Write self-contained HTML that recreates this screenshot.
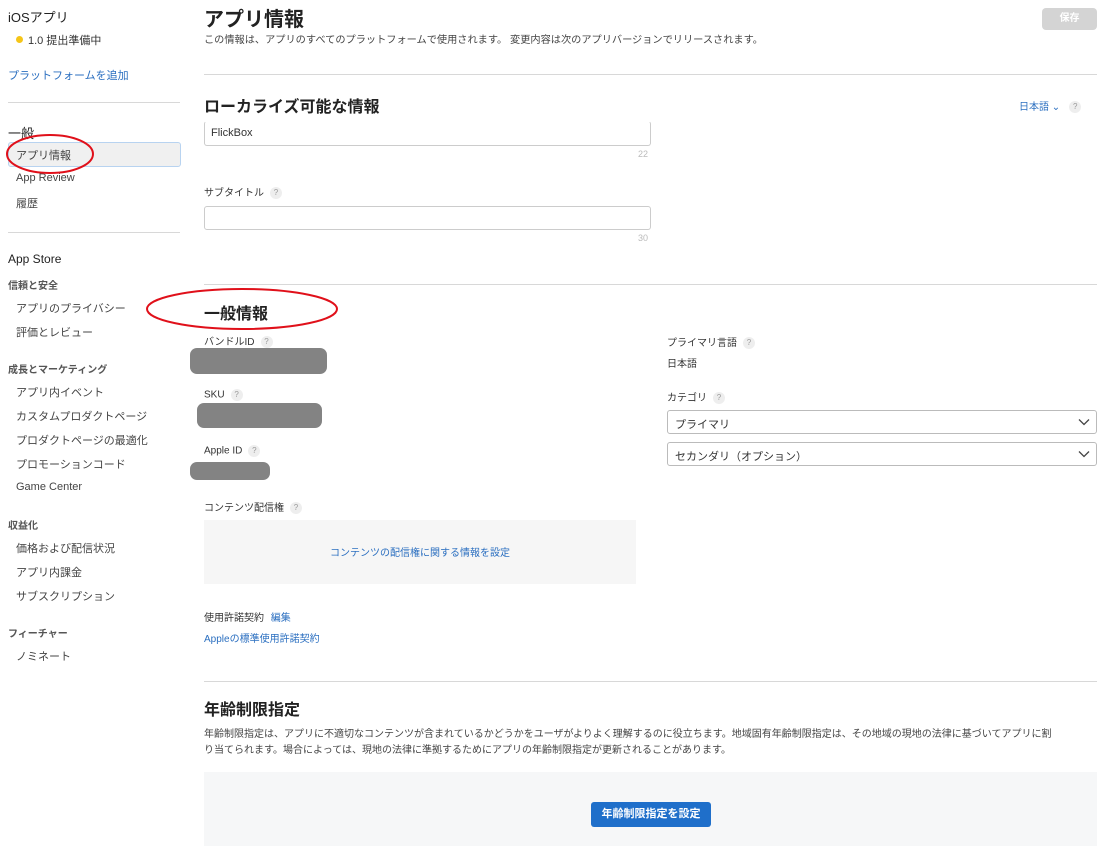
<!DOCTYPE html>
<html><head><meta charset="utf-8"><style>
*{margin:0;padding:0;box-sizing:border-box}
body{width:1108px;height:846px;overflow:hidden;background:#fff;font-family:"Liberation Sans","Noto Sans CJK JP",sans-serif;color:#333;position:relative}
.a{position:absolute;white-space:nowrap}
.s{font-size:11px;color:#444;left:16px}
.h{font-size:10px;font-weight:bold;color:#555;left:8px}
.b{color:#2b6fc0}
.q{display:inline-block;width:12px;height:12px;border-radius:50%;background:#eee;color:#999;font-size:8px;text-align:center;line-height:12px;margin-left:6px;vertical-align:middle}
.hr{position:absolute;height:1px;background:#d8d8d8}
.in{position:absolute;border:1px solid #ccc;border-radius:3px;background:#fff}
.lb{font-size:10px;color:#333}
.cnt{font-size:9px;color:#bbb}
.blob{position:absolute;background:#838383;border-radius:7px}
.sel{position:absolute;left:667px;width:430px;height:24px;border:1px solid #bbb;border-radius:3px;font-size:11px;color:#333;padding:5px 7px}
.sel svg{position:absolute;right:6px;top:7px}
</style></head><body>
<div class="a" style="left:8px;top:7px;font-size:13px;color:#222">iOSアプリ</div>
<div class="a" style="left:16px;top:32px;font-size:11px;color:#333"><span style="display:inline-block;width:7px;height:7px;border-radius:50%;background:#f5c518;margin-right:5px;vertical-align:1px"></span>1.0 提出準備中</div>
<div class="a b" style="left:8px;top:67px;font-size:11px">プラットフォームを追加</div>
<div class="hr" style="left:8px;top:102px;width:172px"></div>
<div class="a" style="left:8px;top:123px;font-size:13px;color:#222">一般</div>
<div style="position:absolute;left:8px;top:142px;width:173px;height:25px;background:#f0f0f0;border:1px solid #b8d3f0;border-radius:3px"></div>
<div class="a s" style="top:147px">アプリ情報</div>
<div class="a s" style="top:172px">App Review</div>
<div class="a s" style="top:195px">履歴</div>
<div class="hr" style="left:8px;top:232px;width:172px"></div>
<div class="a" style="left:8px;top:252px;font-size:12px;color:#222">App Store</div>
<div class="a h" style="top:277px">信頼と安全</div>
<div class="a s" style="top:300px">アプリのプライバシー</div>
<div class="a s" style="top:324px">評価とレビュー</div>
<div class="a h" style="top:361px">成長とマーケティング</div>
<div class="a s" style="top:384px">アプリ内イベント</div>
<div class="a s" style="top:408px">カスタムプロダクトページ</div>
<div class="a s" style="top:432px">プロダクトページの最適化</div>
<div class="a s" style="top:456px">プロモーションコード</div>
<div class="a s" style="top:481px">Game Center</div>
<div class="a h" style="top:517px">収益化</div>
<div class="a s" style="top:540px">価格および配信状況</div>
<div class="a s" style="top:564px">アプリ内課金</div>
<div class="a s" style="top:588px">サブスクリプション</div>
<div class="a h" style="top:625px">フィーチャー</div>
<div class="a s" style="top:648px">ノミネート</div>

<div class="a" style="left:204px;top:3px;font-size:20px;font-weight:bold;color:#222">アプリ情報</div>
<div class="a" style="left:204px;top:31px;font-size:10.2px;color:#444">この情報は、アプリのすべてのプラットフォームで使用されます。 変更内容は次のアプリバージョンでリリースされます。</div>
<div style="position:absolute;left:1042px;top:8px;width:55px;height:22px;background:#d4d4d4;border-radius:4px;color:#fff;font-size:10px;font-weight:bold;text-align:center;line-height:22px">保存</div>
<div class="hr" style="left:204px;top:74px;width:893px"></div>
<div class="a" style="left:204px;top:93px;font-size:16px;font-weight:bold;color:#222">ローカライズ可能な情報</div>
<div class="a b" style="left:1019px;top:98px;font-size:10px">日本語 ⌄<span class="q" style="margin-left:9px">?</span></div>
<div class="in" style="left:204px;top:121px;width:447px;height:25px;border-top-color:#fff"></div>
<div class="a" style="left:211px;top:127px;font-size:11px;color:#333">FlickBox</div>
<div class="a cnt" style="left:638px;top:149px">22</div>
<div class="a lb" style="left:204px;top:184px">サブタイトル<span class="q">?</span></div>
<div class="in" style="left:204px;top:206px;width:447px;height:24px"></div>
<div class="a cnt" style="left:638px;top:233px">30</div>
<div class="hr" style="left:204px;top:284px;width:893px"></div>
<div class="a" style="left:204px;top:300px;font-size:16px;font-weight:bold;color:#222">一般情報</div>
<div class="a lb" style="left:204px;top:333px">バンドルID<span class="q">?</span></div>
<div class="blob" style="left:190px;top:348px;width:137px;height:26px"></div>
<div class="a lb" style="left:204px;top:389px">SKU<span class="q">?</span></div>
<div class="blob" style="left:197px;top:403px;width:125px;height:25px"></div>
<div class="a lb" style="left:204px;top:445px">Apple ID<span class="q">?</span></div>
<div class="blob" style="left:190px;top:462px;width:80px;height:18px"></div>
<div class="a lb" style="left:204px;top:499px">コンテンツ配信権<span class="q">?</span></div>
<div style="position:absolute;left:204px;top:520px;width:432px;height:64px;background:#f6f6f6"></div>
<div class="a b" style="left:204px;width:432px;text-align:center;top:544px;font-size:10px">コンテンツの配信権に関する情報を設定</div>
<div class="a lb" style="left:204px;top:609px">使用許諾契約 <span class="b" style="margin-left:4px">編集</span></div>
<div class="a b" style="left:204px;top:630px;font-size:10px">Appleの標準使用許諾契約</div>

<div class="a lb" style="left:667px;top:334px">プライマリ言語<span class="q">?</span></div>
<div class="a lb" style="left:667px;top:355px">日本語</div>
<div class="a lb" style="left:667px;top:389px">カテゴリ<span class="q">?</span></div>
<div class="sel" style="top:410px">プライマリ<svg width="12" height="8"><path d="M1 1.5L6 6.5L11 1.5" stroke="#444" stroke-width="1.3" fill="none"/></svg></div>
<div class="sel" style="top:442px">セカンダリ（オプション）<svg width="12" height="8"><path d="M1 1.5L6 6.5L11 1.5" stroke="#444" stroke-width="1.3" fill="none"/></svg></div>

<div class="hr" style="left:204px;top:681px;width:893px"></div>
<div class="a" style="left:204px;top:696px;font-size:16px;font-weight:bold;color:#222">年齢制限指定</div>
<div class="a" style="left:204px;top:727px;font-size:10px;color:#444;line-height:16px;white-space:normal;width:850px">年齢制限指定は、アプリに不適切なコンテンツが含まれているかどうかをユーザがよりよく理解するのに役立ちます。地域固有年齢制限指定は、その地域の現地の法律に基づいてアプリに割り当てられます。場合によっては、現地の法律に準拠するためにアプリの年齢制限指定が更新されることがあります。</div>
<div style="position:absolute;left:204px;top:772px;width:893px;height:74px;background:#f6f7f8"></div>
<div style="position:absolute;left:591px;top:802px;width:120px;height:25px;background:#1f6fca;border-radius:3px;color:#fff;font-size:11px;font-weight:bold;text-align:center;line-height:25px">年齢制限指定を設定</div>

<svg style="position:absolute;left:0;top:0" width="1108" height="846">
<ellipse cx="50" cy="154" rx="43" ry="19" fill="none" stroke="#e0101a" stroke-width="2"/>
<ellipse cx="242" cy="309" rx="95" ry="20" fill="none" stroke="#e0101a" stroke-width="2"/>
</svg>
</body></html>
